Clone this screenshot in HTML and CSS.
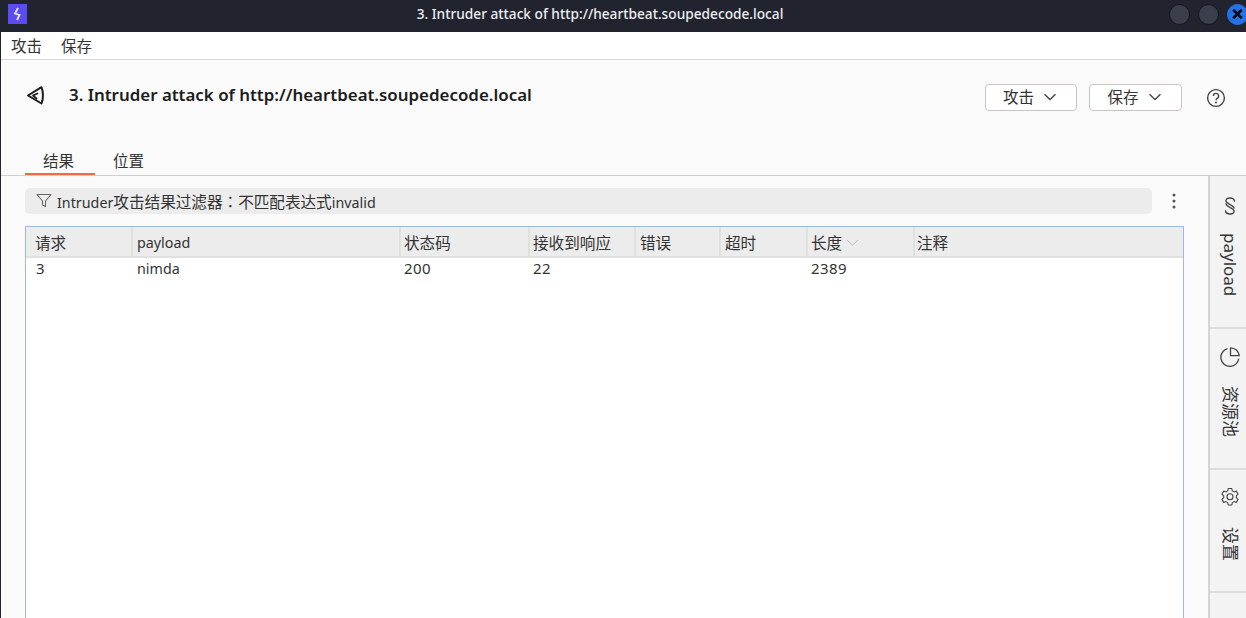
FILE: index.html
```html
<!DOCTYPE html>
<html lang="zh">
<head>
<meta charset="utf-8">
<title>3. Intruder attack of http://heartbeat.soupedecode.local</title>
<link rel="stylesheet" href="styles.css">
</head>
<body>
<div class="window">
  <header class="titlebar">
    <svg class="app-icon" width="19" height="20" viewBox="0 0 19 20"><rect width="19" height="20" fill="#5a4cf0"/><path d="M10 4 7 9.500l4.500 1.500L9 16" fill="none" stroke="#e8e4ff" stroke-width="1.800"/></svg>
    <div class="title">3. Intruder attack of http://heartbeat.soupedecode.local</div>
    <div class="win-controls">
      <span class="win-btn"></span>
      <span class="win-btn"></span>
      <span class="win-btn close"><svg width="20" height="20" viewBox="0 0 20 20"><path d="M5.500 5.500l9 9M14.500 5.500l-9 9" stroke="#0b0d14" stroke-width="2.800" fill="none"/></svg></span>
    </div>
  </header>
  <div class="app">
    <nav class="menubar"><span>攻击</span><span>保存</span></nav>
    <section class="head">
      <svg class="logo" width="20" height="20" viewBox="0 0 20 20"><path d="M2 10.500 15.500 2.200Q18.500 10.500 15.500 18.500Z" fill="none" stroke="#1c1c1c" stroke-width="2" stroke-linejoin="round"/><path d="M7 10.500 11.500 8.500M7 10.500l3.500 3" fill="none" stroke="#1c1c1c" stroke-width="1.700" stroke-linecap="round"/></svg>
      <h1 class="heading">3. Intruder attack of http://heartbeat.soupedecode.local</h1>
      <div class="actions">
        <button class="btn">攻击<svg width="14" height="8" viewBox="0 0 14 8"><path d="M1.500 1.200 7 6.500l5.500-5.300" fill="none" stroke="#444" stroke-width="1.300"/></svg></button>
        <button class="btn">保存<svg width="14" height="8" viewBox="0 0 14 8"><path d="M1.500 1.200 7 6.500l5.500-5.300" fill="none" stroke="#444" stroke-width="1.300"/></svg></button>
        <svg class="help" width="20" height="20" viewBox="0 0 20 20"><circle cx="10" cy="10" r="8.400" fill="none" stroke="#444" stroke-width="1.400"/><path d="M7.400 8a2.600 2.600 0 1 1 3.800 2.300c-.9.500-1.200 1-1.200 1.900" fill="none" stroke="#444" stroke-width="1.400"/><circle cx="10" cy="14.600" r="1" fill="#444"/></svg>
      </div>
    </section>
    <div class="tabs"><span class="tab active">结果</span><span class="tab">位置</span></div>
    <div class="body">
      <main class="content">
        <div class="filter-row">
          <div class="filter">
            <svg width="16" height="15" viewBox="0 0 16 15"><path d="M1 1.500h14L9.500 8v5.500l-3-1.500V8Z" fill="none" stroke="#666" stroke-width="1.100" stroke-linejoin="round"/></svg>
            <span class="filter-text">Intruder<span class="zh">攻击结果过滤器<span class="colon" lang="zh-TW">：</span>不匹配表达式</span>invalid</span>
          </div>
          <svg class="kebab" width="4" height="16" viewBox="0 0 4 16"><circle cx="2" cy="2" r="1.500" fill="#555"/><circle cx="2" cy="8" r="1.500" fill="#555"/><circle cx="2" cy="14" r="1.500" fill="#555"/></svg>
        </div>
        <div class="table">
          <div class="row header">
            <div class="cell zh">请求</div><div class="cell">payload</div><div class="cell zh">状态码</div><div class="cell zh">接收到响应</div><div class="cell zh">错误</div><div class="cell zh">超时</div>
            <div class="cell zh">长度<svg class="sort" width="13" height="7" viewBox="0 0 13 7"><path d="M1 1l5.500 5L12 1" fill="none" stroke="#bbb" stroke-width="1"/></svg></div>
            <div class="cell zh last">注释</div>
          </div>
          <div class="row data">
            <div class="cell num">3</div><div class="cell">nimda</div><div class="cell num">200</div><div class="cell num">22</div><div class="cell"></div><div class="cell"></div><div class="cell num">2389</div><div class="cell last"></div>
          </div>
        </div>
      </main>
      <aside class="side">
        <div class="side-tab first">
          <svg width="18" height="20" viewBox="0 0 18 20"><path d="M13.500 5C13 2.500 11 2 9 2 6 2 4.500 3.500 5 5.500 5.500 7.500 12 9 13 12M4.500 15C5 17.500 7 18 9 18 12 18 13.500 16.500 13 14.500 12.500 12.500 6 11 5 8" fill="none" stroke="#444" stroke-width="1.400" stroke-linecap="round"/></svg>
          <span class="side-label">payload</span>
        </div>
        <div class="side-tab second">
          <svg width="20" height="20" viewBox="0 0 20 20"><path d="M10.500.8V8.700H19.300A9 9 0 0 0 10.500.8Z" fill="none" stroke="#444" stroke-width="1.300" stroke-linejoin="round"/><path d="M7.500 1.700A9 9 0 1 0 18.800 11.500" fill="none" stroke="#444" stroke-width="1.300"/></svg>
          <span class="side-label">资源池</span>
        </div>
        <div class="side-tab third">
          <svg width="20" height="20" viewBox="0 0 20 20"><path d="M8.200 1.500h3.600l.5 2.400 1.700 1 2.300-.8 1.800 3.100-1.800 1.600v1.900l1.800 1.600-1.800 3.100-2.300-.8-1.700 1-.5 2.400H8.200l-.5-2.400-1.700-1-2.300.8-1.800-3.100 1.800-1.600V8.800L1.900 7.200l1.800-3.100 2.300.8 1.700-1Z" fill="none" stroke="#444" stroke-width="1.100" stroke-linejoin="round"/><circle cx="10" cy="9.700" r="3" fill="none" stroke="#444" stroke-width="1.100"/></svg>
          <span class="side-label">设置</span>
        </div>
      </aside>
    </div>
  </div>
</div>
</body>
</html>
```
FILE: styles.css
```css
* { box-sizing: border-box; }
html, body { margin: 0; height: 100%; overflow: hidden; }
body { font-family: "Noto Sans", "Noto Sans CJK SC", sans-serif; font-size: 14.300px; color: #333; }
.window { width: 1246px; height: 618px; display: flex; flex-direction: column; background: #21242f; }
.titlebar { height: 32px; flex: none; display: flex; align-items: center; padding-left: 8px; position: relative; color: #eceef2; }
.app-icon { margin-top: -4px; }
.title { position: absolute; left: 0; right: 0; top: 5px; text-align: center; font-size: 13.700px; font-weight: 500; line-height: 18px; padding-right: 46px; }
.win-controls { margin-left: auto; display: flex; gap: 8px; margin-top: -4px; margin-right: -2px; }
.win-btn { width: 21px; height: 21px; border-radius: 50%; background: #3a3e4d; border: 1px solid #14161d; display: flex; align-items: center; justify-content: center; }
.win-btn.close { background: #2472ea; border-color: #2472ea; }
.app { flex: 1; min-height: 0; margin-left: 1px; background: #fafafa; display: flex; flex-direction: column; }
.menubar { height: 28px; flex: none; background: #fff; border-bottom: 1px solid #d9d9d9; display: flex; align-items: center; gap: 19px; padding-left: 10px; font-size: 15.500px; color: #333; }
.head { height: 84px; flex: none; display: flex; align-items: flex-start; padding-left: 25px; }
.logo { margin-top: 25px; }
.heading { margin: 23px 0 0 23px; font-size: 16.900px; font-weight: 600; line-height: 24px; color: #1c1c1c; }
.actions { margin-left: auto; display: flex; align-items: center; margin-top: 24px; }
.btn { width: 92px; height: 27px; margin-right: 12px; padding: 0 2px 2px 0; display: flex; align-items: center; justify-content: center; gap: 9px; background: #fff; border: 1px solid #c9c5c5; border-radius: 4px; font: inherit; font-size: 15.500px; line-height: 20px; color: #333; }
.btn:nth-of-type(2) { width: 93px; margin-right: 24px; }
.help { margin-right: 20px; }
.tabs { height: 32px; flex: none; display: flex; padding-left: 24px; border-bottom: 1px solid #cfcfcf; }
.tab { width: 70px; height: 31px; text-align: center; font-size: 15.500px; line-height: 24px; padding-top: 5px; color: #333; }
.tab + .tab { width: 67px; }
.tab.active { border-bottom: 2px solid #f26a3d; padding-right: 3px; }
.body { flex: 1; min-height: 0; display: flex; }
.content { flex: 1; min-width: 0; padding: 11px 24px 0 24px; }
.filter-row { display: flex; align-items: center; height: 27px; }
.filter { width: 1127px; height: 26px; background: #ececec; border-radius: 5px; display: flex; align-items: center; gap: 5px; padding-left: 11px; color: #333; }
.filter-text { line-height: 24px; white-space: nowrap; margin-top: 2px; }
.zh { font-size: 15.600px; }
.colon { font-family: "Noto Sans CJK TC", sans-serif; }
.kebab { margin-left: 20px; margin-top: 0; }
.table { margin-top: 12px; width: 1159px; height: 400px; background: #fff; border: 1px solid #9dbbe0; border-bottom: 0; }
.row { display: grid; grid-template-columns: 107px 268px 129px 106px 85px 87px 107px 1fr; height: 24px; }
.row.header { height: 31px; background: #ececec; border-bottom: 2px solid #e0e0e0; }
.row.data { margin-top: -2px; }
.cell { padding-left: 4px; line-height: 24px; color: #333; white-space: nowrap; display: flex; align-items: center; gap: 4px; }
.row .cell:nth-child(1) { padding-left: 10px; }
.row .cell:nth-child(3), .row .cell:nth-child(7), .row .cell:nth-child(4) { padding-left: 3px; }
.row .cell:nth-child(8) { padding-left: 2px; }
.num { font-size: 15px; letter-spacing: .4px; padding-bottom: 2px; }
.header .cell { border-right: 2px solid #e0e0e0; height: 29px; padding-top: 2px; }
.header .cell:nth-child(1) { padding-left: 9px; }
.header .cell.last { border-right: 0; }
.side { width: 38px; flex: none; background: #f4f3f3; border-left: 2px solid #d5d5d5; display: flex; flex-direction: column; }
.side-tab { display: flex; flex-direction: column; align-items: center; border-bottom: 2px solid #dcdcdc; padding-left: 3px; color: #333; }
.side-tab.first { height: 153px; padding-top: 20px; gap: 17px; }
.side-tab.second { height: 141px; padding-top: 18px; gap: 19px; }
.side-tab.third { height: 123px; padding-top: 17px; gap: 20px; }
.side-label { writing-mode: vertical-rl; text-orientation: sideways; font-size: 17px; line-height: 22px; }
```
